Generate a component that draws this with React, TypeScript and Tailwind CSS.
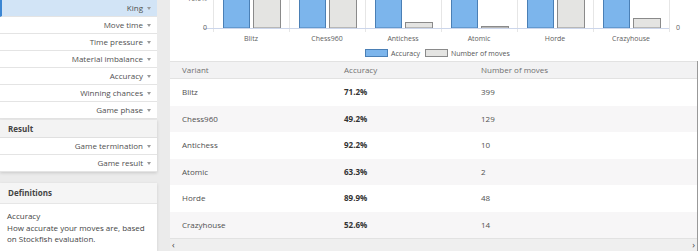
import React from "react";

const font = { fontFamily: '"Open Sans", "Noto Sans", sans-serif' };

const filterRows = ["King", "Move time", "Time pressure", "Material imbalance", "Accuracy", "Winning chances", "Game phase"];
const resultRows = ["Game termination", "Game result"];

const data = [
  { v: "Blitz", a: "71.2%", n: "399", top: -10 },
  { v: "Chess960", a: "49.2%", n: "129", top: -10 },
  { v: "Antichess", a: "92.2%", n: "10", top: 22 },
  { v: "Atomic", a: "63.3%", n: "2", top: 26 },
  { v: "Horde", a: "89.9%", n: "48", top: -10 },
  { v: "Crazyhouse", a: "52.6%", n: "14", top: 18 },
];

function Caret() {
  return (
    <svg width="4" height="3" viewBox="0 0 4 3" className="ml-[4px] mt-[1px] shrink-0">
      <path d="M0 0 L4 0 L2 3 Z" fill="#9a9a9a" />
    </svg>
  );
}

function Row({ label, active }: { label: string; active?: boolean }) {
  return (
    <div
      className={
        "h-[17px] flex items-center justify-end pr-[6px] border-b border-[#e4e4e4] text-[8px] text-[#505050] " +
        (active ? "bg-[#d2e4f6] border-l-2 border-l-[#3b86d3]" : "bg-white")
      }
    >
      <span>{label}</span>
      <Caret />
    </div>
  );
}

function Chart() {
  return (
    <svg width="530" height="62" className="block" style={{ fontFamily: '"Open Sans", sans-serif' }}>
      {[0, 1, 2, 3, 4, 5, 6].map((i) => (
        <line key={i} x1={43 + 76 * i + 0.5} x2={43 + 76 * i + 0.5} y1={-5} y2={32} stroke="#e6e6e6" strokeWidth="1" />
      ))}
      {data.map((d, i) => {
        const x = 43 + 76 * i;
        return (
          <g key={d.v}>
            <rect x={x + 10.5} y={-10} width={26} height={38} fill="#7cb5ec" stroke="#4a7fb5" strokeWidth="1" />
            <rect x={x + 40.5} y={d.top + 0.5} width={27} height={27.5 - d.top} fill="#e4e4e2" stroke="#8a8a8a" strokeWidth="1" />
            <text x={x + 38} y={40.5} textAnchor="middle" fontSize="7" fill="#606060">{d.v}</text>
          </g>
        );
      })}
      <line x1={33} x2={499} y1={28.5} y2={28.5} stroke="#ccd6eb" strokeWidth="1" />
      <text x={37} y={30} textAnchor="end" fontSize="7" fill="#606060">0</text>
      <text x={37} y={1} textAnchor="end" fontSize="7" fill="#606060">10.0%</text>
      <text x={506} y={30} fontSize="7" fill="#606060">0</text>
      <rect x={195.5} y={49.5} width={22} height={7} fill="#7cb5ec" stroke="#4a7fb5" strokeWidth="1" />
      <text x={221} y={55.5} fontSize="7" fill="#555">Accuracy</text>
      <rect x={255.5} y={49.5} width={22} height={7} fill="#e4e4e2" stroke="#8a8a8a" strokeWidth="1" />
      <text x={281} y={55.5} fontSize="7" fill="#555">Number of moves</text>
    </svg>
  );
}

export default function App() {
  return (
    <div className="w-[700px] h-[251px] overflow-hidden bg-[#ebebeb] flex" style={font}>
      <div className="w-[157px] flex flex-col shrink-0">
        <div className="flex flex-col">
          {filterRows.map((r, i) => (
            <Row key={r} label={r} active={i === 0} />
          ))}
        </div>
        <div className="mt-[1px] shadow-[0_1px_3px_rgba(0,0,0,0.15)]">
          <div className="h-[18px] bg-[#f3f3f3] border-b border-[#e0e0e0] flex items-center pl-[8px] text-[8px] font-bold text-[#444]">Result</div>
          {resultRows.map((r) => (
            <Row key={r} label={r} />
          ))}
        </div>
        <div className="mt-[11px] bg-white flex-1 shadow-[0_1px_3px_rgba(0,0,0,0.12)]">
          <div className="h-[21px] bg-[#f5f5f5] border-b border-[#e6e6e6] flex items-center pl-[8px] text-[8px] font-bold text-[#444]">Definitions</div>
          <div className="pl-[7px] pt-[6px] pr-[10px] text-[8px] leading-[11.5px] text-[#444]">
            <div>Accuracy</div>
            <div>How accurate your moves are, based on Stockfish evaluation.</div>
          </div>
        </div>
      </div>
      <div className="w-[13px] shrink-0" />
      <div className="flex-1 flex flex-col bg-white">
        <Chart />
        <div className="flex flex-col border-r border-[#999] mr-[2px]">
          <div className="grid grid-cols-[162px_137px_1fr] h-[18px] items-center bg-[#f2f2f3] border-y border-[#e2e2e2] text-[8px] text-[#707070]">
            <div className="pl-3">Variant</div>
            <div className="pl-3">Accuracy</div>
            <div className="pl-3">Number of moves</div>
          </div>
          {data.map((d, i) => (
            <div
              key={d.v}
              className={
                "grid grid-cols-[162px_137px_1fr] h-[26.5px] items-center text-[8px] text-[#505050] " +
                (i % 2 === 1 ? "bg-[#f7f6f7]" : "bg-white")
              }
            >
              <div className="pl-3">{d.v}</div>
              <div className="pl-3 font-bold text-[#333]">{d.a}</div>
              <div className="pl-3">{d.n}</div>
            </div>
          ))}
          <div className="h-[13px] bg-[#efefef] border-t border-[#e2e2e2] flex items-center justify-between px-[2px] text-[9px] text-[#444]">
            <span>‹</span>
            <span>›</span>
          </div>
        </div>
      </div>
    </div>
  );
}
